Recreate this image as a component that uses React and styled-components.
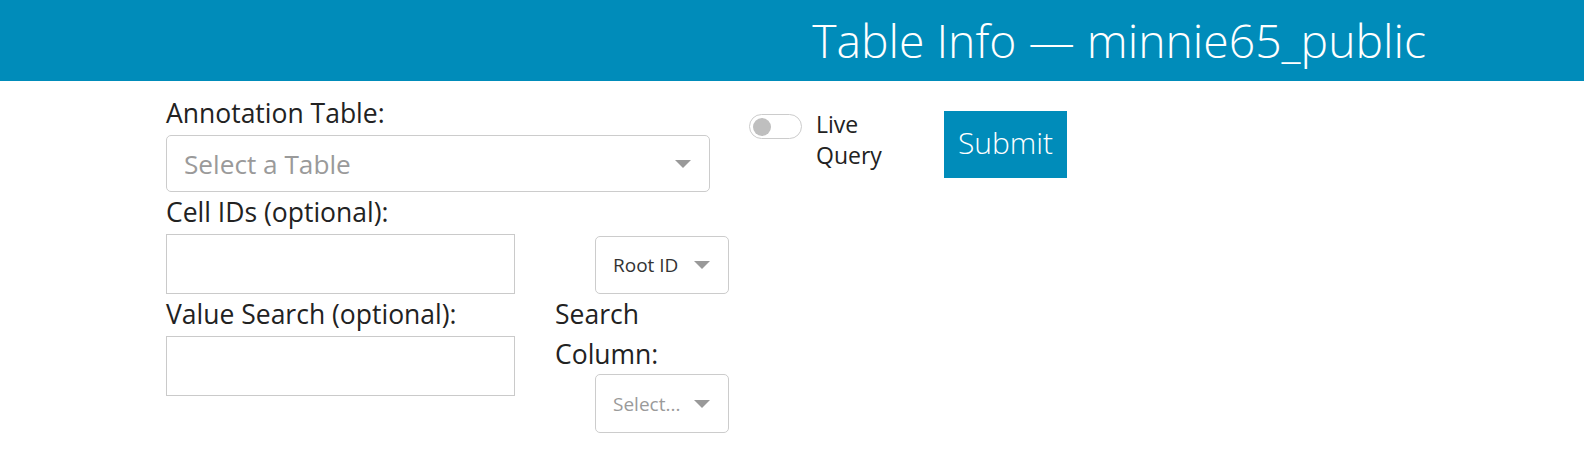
import styled, { createGlobalStyle } from 'styled-components';

const GlobalStyle = createGlobalStyle`
    body {
        margin: 0;
        font-family: "Open Sans", "Noto Sans", sans-serif;
        color: #222;
        background: #fff;
    }
`

function Caret() {
    return (
        <svg width="16" height="8" viewBox="0 0 16 8">
            <path d="M0 0 L16 0 L8 8 Z" fill="#999" />
        </svg>
    )
}

export default function App() {
    return (
        <>
            <GlobalStyle />
            <Header>
                <Title>Table Info — minnie65_public</Title>
            </Header>
            <Main>
                <FormColumn>
                    <Label>Annotation Table:</Label>
                    <Select $width="544px" $height="57px">
                        <SelectText $big $placeholder>Select a Table</SelectText>
                        <Caret />
                    </Select>
                    <Row>
                        <Field>
                            <Label>Cell IDs (optional):</Label>
                            <TextInput />
                        </Field>
                        <SideField $end>
                            <Select $width="134px" $height="58px">
                                <SelectText>Root ID</SelectText>
                                <Caret />
                            </Select>
                        </SideField>
                    </Row>
                    <Row>
                        <Field>
                            <Label>Value Search (optional):</Label>
                            <TextInput />
                        </Field>
                        <SideField>
                            <NarrowLabel>Search Column:</NarrowLabel>
                            <Select $width="134px" $height="59px">
                                <SelectText $placeholder>Select...</SelectText>
                                <Caret />
                            </Select>
                        </SideField>
                    </Row>
                </FormColumn>
                <ToggleGroup>
                    <Switch>
                        <Knob />
                    </Switch>
                    <ToggleLabel>Live Query</ToggleLabel>
                </ToggleGroup>
                <SubmitButton>Submit</SubmitButton>
            </Main>
        </>
    )
}

const Header = styled.div`
    display: flex;
    justify-content: flex-end;
    align-items: center;
    height: 81px;
    padding-right: 158px;
    background: #008cba;
`

const Title = styled.h1`
    margin: 0;
    font-size: 46.3px;
    font-weight: 300;
    color: #fff;
    line-height: 81px;
`

const Main = styled.div`
    display: flex;
    align-items: flex-start;
    padding: 12px 0 0 166px;
`

const FormColumn = styled.div`
    display: flex;
    flex-direction: column;
    width: 563px;
`

const Label = styled.div`
    font-size: 26.5px;
    line-height: 40px;
    margin-bottom: 2px;
    white-space: nowrap;
`

const NarrowLabel = styled(Label)`
    white-space: normal;
    width: 120px;
    margin-bottom: 0;
`

const Select = styled.div`
    box-sizing: border-box;
    display: flex;
    align-items: center;
    justify-content: space-between;
    width: ${p => p.$width};
    height: ${p => p.$height};
    padding: 0 18px 0 17px;
    border: 1px solid #ccc;
    border-radius: 5px;
    background: #fff;
`

const SelectText = styled.span`
    font-size: ${p => (p.$big ? '26.2px' : '19px')};
    color: ${p => (p.$placeholder ? '#9a9a9a' : '#333')};
    white-space: nowrap;
`

const Row = styled.div`
    display: flex;
    gap: 40px;
`

const Field = styled.div`
    display: flex;
    flex-direction: column;
    width: 349px;
`

const SideField = styled.div`
    display: flex;
    flex-direction: column;
    align-items: flex-end;
    justify-content: ${p => (p.$end ? 'flex-end' : 'flex-start')};
    width: 174px;

    & > ${Label} {
        align-self: flex-start;
    }
`

const TextInput = styled.div`
    box-sizing: border-box;
    width: 349px;
    height: 60px;
    border: 1px solid #cacaca;
    background: #fff;
`

const ToggleGroup = styled.div`
    display: flex;
    align-items: flex-start;
    gap: 14px;
    margin-left: 20px;
    margin-top: 16px;
`

const Switch = styled.div`
    box-sizing: border-box;
    position: relative;
    width: 53px;
    height: 25px;
    margin-top: 5px;
    border: 1px solid #ccc;
    border-radius: 13px;
    background: #fff;
`

const Knob = styled.span`
    position: absolute;
    top: 3px;
    left: 3px;
    width: 18px;
    height: 18px;
    border-radius: 50%;
    background: #bfbfbf;
`

const ToggleLabel = styled.div`
    width: 80px;
    font-size: 23px;
    line-height: 31px;
`

const SubmitButton = styled.button`
    box-sizing: border-box;
    width: 123px;
    height: 67px;
    margin-left: 48px;
    margin-top: 18px;
    padding: 0 0 4px;
    border: none;
    background: #008cba;
    color: #fff;
    font-family: "Open Sans", sans-serif;
    font-size: 30px;
    font-weight: 300;
    cursor: pointer;
`
